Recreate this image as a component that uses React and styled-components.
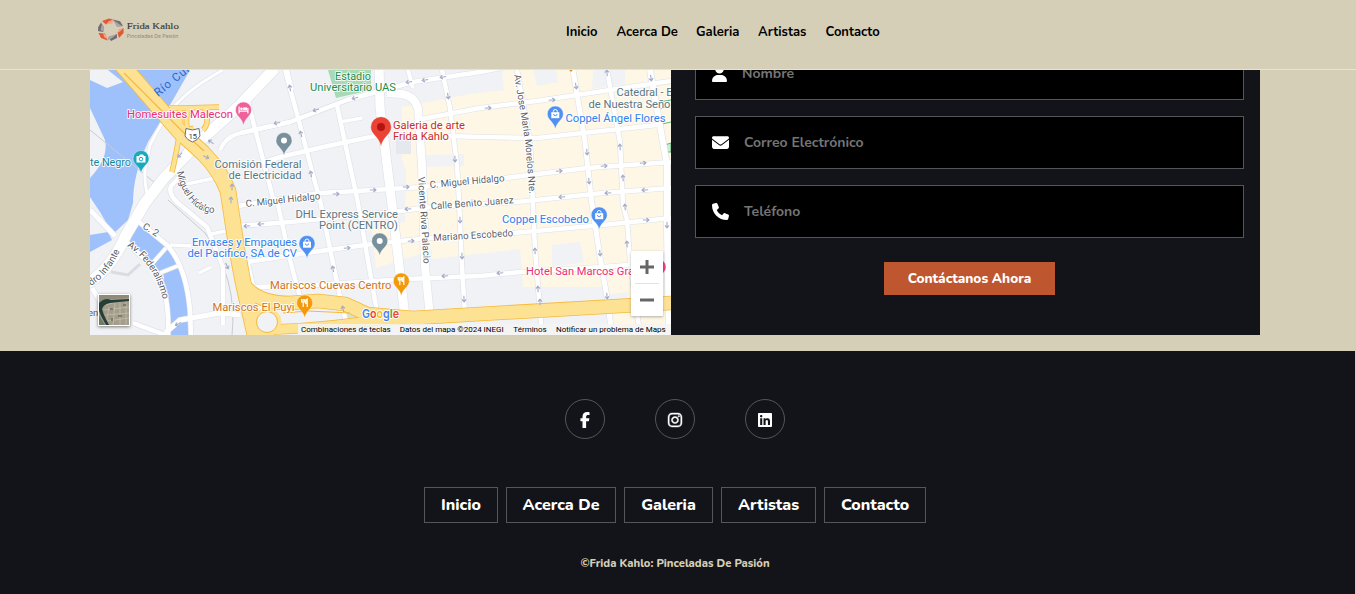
import React from "react";
import styled, { createGlobalStyle } from "styled-components";
import { FaUser, FaEnvelope, FaPhone, FaFacebookF, FaInstagram, FaLinkedin } from "react-icons/fa6";

const sand = "#d6cfb7";
const ink = "#131419";

const GlobalStyle = createGlobalStyle`
  * { box-sizing: border-box; }
  body {
    margin: 0;
    background: ${sand};
    font-family: Nunito, "Open Sans", "Noto Sans", sans-serif;
    overflow: hidden;
  }
`;

const Page = styled.div`
  height: 594px;
  display: flex;
  flex-direction: column;
`;

const Header = styled.header`
  height: 70px;
  flex: none;
  display: flex;
  background: ${sand};
  border-bottom: 1px solid #e8e3d3;
`;

const Brand = styled.a`
  width: 566px;
  padding: 15px 0 0 96px;
`;

const TopNav = styled.nav`
  display: flex;
  gap: 18px;
  padding-top: 23px;
`;

const TopLink = styled.a`
  width: ${(p) => p.$w}px;
  font-size: 13px;
  font-weight: 700;
  line-height: 18px;
  white-space: nowrap;
  color: #000;
`;

const Contact = styled.main`
  height: 281px;
  flex: none;
  padding: 0 96px 16px 90px;
  display: flex;
`;

const MapFrame = styled.div`
  position: relative;
  width: 581px;
  height: 265px;
  overflow: hidden;
  background: #f0f2f5;
  & > svg { display: block; }
`;

const ZoomControl = styled.div`
  position: absolute;
  left: 541px;
  top: 181px;
  width: 32px;
  height: 65px;
  padding: 0 4px;
  background: #fff;
  border-radius: 1px;
  box-shadow: 0 1px 3px rgba(0, 0, 0, 0.3);
  display: flex;
  flex-direction: column;
`;

const ZoomButton = styled.div`
  flex: 1;
  display: grid;
  place-items: center;
  & + & { border-top: 1px solid #e3e3e3; }
`;

const Satellite = styled.div`
  position: absolute;
  left: 8px;
  top: 224px;
  width: 32px;
  height: 32px;
  border: 1px solid #fff;
  box-shadow: 0 1px 3px rgba(0, 0, 0, 0.5);
  svg { display: block; }
`;

const Credits = styled.div`
  position: absolute;
  right: 0;
  bottom: 0;
  height: 11px;
  width: 373px;
  padding: 0 5px 0 3px;
  background: rgba(245, 245, 245, 0.85);
  display: flex;
  justify-content: space-between;
  font: 8px/12px Roboto, sans-serif;
  color: #000;
  white-space: nowrap;
`;

const Credit = styled.span`
  width: ${(p) => p.$w}px;
`;

const Form = styled.form`
  width: 589px;
  height: 265px;
  overflow: hidden;
  padding: 0 16px 40px 24px;
  background: ${ink};
  display: flex;
  flex-direction: column;
  justify-content: flex-end;
  gap: 16px;
`;

const Field = styled.label`
  height: 53px;
  flex: none;
  display: flex;
  align-items: center;
  gap: ${(p) => p.$gap || 15}px;
  padding-left: ${(p) => p.$pad || 16}px;
  background: #000;
  border: 1px solid #55565a;
  color: #fff;
`;

const Placeholder = styled.span`
  font-size: 14px;
  font-weight: 700;
  color: #757575;
`;

const Submit = styled.div`
  width: 171px;
  height: 33px;
  flex: none;
  align-self: center;
  margin-top: 8px;
  background: #be5630;
  color: #fff;
  font-size: 13.6px;
  font-weight: 800;
  line-height: 33px;
  text-align: center;
  white-space: nowrap;
`;

const Footer = styled.footer`
  flex: 1;
  margin-right: 1px;
  padding-top: 48px;
  padding-right: 5px;
  background: ${ink};
  display: flex;
  flex-direction: column;
  align-items: center;
`;

const Socials = styled.div`
  display: flex;
  gap: 50px;
`;

const Social = styled.a`
  width: 40px;
  height: 40px;
  padding-top: 2px;
  border: 1px solid #55565a;
  border-radius: 50%;
  display: grid;
  place-items: center;
  color: #fff;
  svg {
    stroke: #fff;
    stroke-width: ${(p) => p.$stroke || 0};
  }
`;

const FooterNav = styled.nav`
  display: flex;
  gap: 8px;
  margin-top: 48px;
`;

const FooterLink = styled.a`
  width: ${(p) => p.$w}px;
  height: 36px;
  border: 1px solid #55565a;
  color: #fff;
  font-size: 16px;
  font-weight: 800;
  line-height: 34px;
  text-align: center;
  white-space: nowrap;
`;

const Copyright = styled.p`
  margin: 31px 0 0;
  font-size: 11.2px;
  font-weight: 800;
  line-height: 19px;
  color: ${sand};
`;

function Logo() {
  return (
    <svg width="90" height="30" viewBox="96 15 90 30">
      <path d="M102 21 L109 18.6 L113 19.5 L106 24.5Z" fill="#e2592f" />
      <path d="M106 24.5 L109 21 L113.5 20 L112.5 23.3Z" fill="#f3a08c" />
      <path d="M113 19.6 L120 21.3 L123 26 L117 25.5Z" fill="#736c70" />
      <path d="M113 20 L117 22.5 L122.5 26.5 L117 27Z" fill="#aaa5a4" />
      <path d="M123.5 28 L123.6 33 L119 38 L117.5 32.5Z" fill="#e2592f" />
      <path d="M119 29 L123 28 L119.5 32 L117.5 32.5Z" fill="#f3a08c" />
      <path d="M117 34 L117 38 L111 41 L108.5 37.5Z" fill="#736c70" />
      <path d="M108.5 36.5 L117 34 L112 38 L107 40.5Z" fill="#aaa5a4" />
      <path d="M98.5 33 L105 33.5 L107.5 40.5 L101 38Z" fill="#e2592f" />
      <path d="M103 33 L106 35 L108 39.5 L104 37Z" fill="#f3a08c" />
      <path d="M101 22.5 L104 27.5 L103 32 L98 31 L98.2 27Z" fill="#736c70" />
      <path d="M102 24 L104 27 L103.5 32 L100.5 30Z" fill="#aaa5a4" />
      <text x="126.8" y="28.8" textLength="52" lengthAdjust="spacingAndGlyphs" fontFamily="Liberation Serif, serif" fontSize="9" fill="#3a3a3c" stroke="#3a3a3c" strokeWidth="0.15">Frida Kahlo</text>
      <text x="126.8" y="37.8" textLength="51.5" lengthAdjust="spacingAndGlyphs" fontFamily="Inter, sans-serif" fontSize="4.8" fill="#8a857a">Pinceladas De Pasión</text>
    </svg>
  );
}

const streets = [
  ["M285 70L300 125 313 175 320 200 340 297 348 330", 4.5],
  ["M337 105L347 152 357 198 377 312", 4.5],
  ["M240 133L290 122 347 100 413 82 480 72 500 68", 4.5],
  ["M340 122L362 118", 3.5],
  ["M220 150Q225 138 237 134L290 122", 4],
  ["M265 162L280 157 323 147 380 135", 4.5],
  ["M422 119L480 108 537 101 610 90 671 81", 4.5],
  ["M420 135L480 137 537 138 583 133 657 125", 4.5],
  ["M238 206L320 193 357 191 423 187 505 178 587 168 671 162", 4.5],
  ["M236 226L290 222 393 212 430 207 517 202 603 193 671 188", 4.5],
  ["M247 262L313 252 380 243 430 238 513 233 603 225 671 218", 4.5],
  ["M247 260L253 287 300 286 407 279 480 276 520 272 603 267 640 264", 4.5],
  ["M442 70L450 108 457 165 459 200 462 267 465 315", 4.5],
  ["M408 70L413 88", 4],
  ["M517 70L530 142 533 205 535 250 542 335", 4.5],
  ["M573 70L585 142 592 205 600 257 607 297 612 335", 5],
  ["M607 70L620 142 623 205 627 220 630 260 640 335", 4.5],
  ["M650 70L667 165 667 230 669 335", 6],
  ["M247 98L273 198 277 200 290 260 304 312", 4.5],
  ["M287 70L292 90", 4],
  ["M223 70Q190 88 175 106T150 145L145 170Q144 190 151 203", 3],
  ["M184 172L171 186Q168 194 178 203L207 227 223 267 223 325", 4.5],
  ["M187 184L215 178", 3.5],
  ["M170 245L191 246", 3.5],
  ["M208 235L225 231", 3.5],
  ["M199 273L211 267", 3.5],
  ["M138 221L167 245Q186 266 190 310L191 335", 4.5],
  ["M125 241L153 267Q170 290 168 335", 4.5],
  ["M165 333L180 320 220 313 240 315", 5],
  ["M150 266L166 248M160 273L180 265", 3.5],
  ["M90 210L115 236", 5],
  ["M92 288L99 300M133 323L168 336", 4.5],
  ["M275 68L240 105 200 141 164 178 145 203 126 235Q112 268 88 283", 11],
  ["M379 65L380 108 385 148 392 205 405 317", 9],
  ["M387 93L402 94Q414 96 418 108L422 165 425 267 430 317", 8],
];

const highways = [
  ["M180 108Q183 125 172 172", 4],
  ["M170 108L185 108 219 107M188 109Q183 134 194 128M205 109Q210 124 203 130", 4],
  ["M122 65L180 132 203 153Q220 170 228 191L237 250 243 282 256 340", 15],
  ["M243 283Q255 303 290 303L318 301 345 304 367 314 413 318 480 314 671 303", 13],
  ["M250 330Q300 330 362 322L420 318", 9],
];

const oneWays = [
  [316, 110, 162], [355, 98, 165], [409, 82, 170], [448, 96, 82], [425, 80, 170], [443, 77, 170],
  [301, 134, -105], [290, 88, -100], [311, 174, -100], [336, 194, 0], [373, 190, 0], [406, 187, 0], [455, 159, 88],
  [488, 108, -5], [552, 100, -5], [576, 86, 80], [607, 73, -95], [651, 78, 82], [587, 152, 84], [620, 147, -95],
  [559, 171, -4], [604, 166, -4], [643, 163, -4], [589, 181, 84], [623, 178, -95], [562, 197, 176], [608, 193, 176], [645, 190, 176],
  [180, 155, 132], [211, 142, 215], [232, 187, -90], [231, 200, -90], [247, 226, 176], [261, 224, 176], [277, 123, 170],
  [347, 248, -5], [333, 269, -100], [411, 241, -4], [408, 209, 176], [460, 220, 88], [462, 256, 88], [445, 276, 176], [464, 299, 88],
  [343, 309, -100], [500, 273, 176], [535, 251, -92], [538, 289, -92], [540, 302, -92], [600, 253, 84], [607, 296, 84], [627, 244, -95], [646, 220, 0], [667, 225, 90], [625, 207, -95],
  [206, 157, 25], [227, 266, 65], [178, 324, 150],
];

const teal = "#5b7885";
const green = "#1e8e4a";
const pink = "#ec2f73";
const red = "#cc2b28";
const blue = "#2f80f0";
const orange = "#d27318";

const labels = [
  ["Estadio", 335, 80, 36, green],
  ["Universitario UAS", 310, 91, 86, green],
  ["Homesuites Malecon", 127, 118, 106, pink],
  ["Galeria de arte", 393, 129.3, 72, red],
  ["Frida Kahlo", 393, 140.2, 56, red],
  ["Comisión Federal", 214.5, 167.7, 87, teal],
  ["de Electricidad", 228.5, 178.5, 73, teal],
  ["te Negro", 90, 165.7, 41, "#16869a"],
  ["DHL Express Service", 295.5, 218.2, 102.5, teal],
  ["Point (CENTRO)", 319, 229, 79, teal],
  ["Envases y Empaques", 192, 246.3, 105, blue],
  ["del Pacifico, SA de CV", 187.5, 257.2, 109.5, blue],
  ["Mariscos Cuevas Centro", 270, 288.5, 121.5, orange],
  ["Mariscos El Puyi", 212.5, 311, 82, orange],
  ["Coppel Ángel Flores", 565.5, 122, 100, blue],
  ["Coppel Escobedo", 502, 223, 87, blue],
  ["Hotel San Marcos Gra", 526, 275, 108, pink],
  ["Catedral - E", 616.5, 96.3, 56, teal],
  ["de Nuestra Seño", 588.5, 107.8, 82, teal],
];

const streetNames = [
  ["s1", "C. Miguel Hidalgo", "M430 188L507 181", 75],
  ["s2", "C. Miguel Hidalgo", "M246 207L322 199", 75],
  ["s3", "Calle Benito Juarez", "M431 209.5L516 203", 83],
  ["s4", "Mariano Escobedo", "M433.5 241L515 236", 80],
  ["s5", "Vicente Riva Palacio", "M418 177L424 268", 87],
  ["s6", "Av. Jose Maria Morelos Nte.", "M514 75L525 140 530 200", 120],
  ["s7", "Miguel Hidalgo", "M177 172Q180 190 192 203T223 212", 60],
  ["s8", "dro Infante", "M91 286Q110 274 121 248", 46],
  ["s9", "Av. Federalismo", "M127 246Q155 265 163 300", 66],
  ["s10", "C. 2", "M142 228L160 239", 17],
];

function Pin({ x, y, tip, r = 8, color, kind }) {
  return (
    <g>
      <path
        d={`M${x - r} ${y}a${r} ${r} 0 1 1 ${2 * r} 0c0 ${r * 0.75} ${-r * 0.8} ${r * 0.9} ${-r} ${tip - y}c${-r * 0.2} ${-(tip - y - r * 0.9)} ${-r} ${-(tip - y - r * 0.75)} ${-r} ${-(tip - y)}z`}
        fill={color}
        stroke="#fff"
        strokeWidth="0.4"
      />
      {kind === "dot" && <circle cx={x} cy={y} r="3" fill="#fff" />}
      {kind === "main" && <circle cx={x} cy={y} r="4" fill="#b31412" />}
      {kind === "food" && (
        <path d={`M${x - 3} ${y - 4}v3h3v-3M${x - 1.5} ${y - 4}v8M${x + 2.5} ${y + 4}v-8q-2 1 -1.5 4.5h1.5`} fill="none" stroke="#fff" strokeWidth="1.2" />
      )}
      {kind === "bag" && (
        <g>
          <path d={`M${x - 2} ${y - 1.5}v-1a2 2 0 0 1 4 0v1`} fill="none" stroke="#fff" strokeWidth="1" />
          <path d={`M${x - 4} ${y - 1.8}h8v6h-8z`} fill="#fff" />
          <path d={`M${x - 1.7} ${y}a1.7 1.7 0 0 0 3.4 0`} fill="none" stroke={color} strokeWidth="1" />
        </g>
      )}
      {kind === "bed" && (
        <g fill="#fff">
          <path d={`M${x - 5} ${y - 3.5}h1.2v4h7.6v-2.5h1.2v5.5h-1.2v-1.7h-7.6v1.7h-1.2z`} />
          <circle cx={x - 2} cy={y - 1.3} r="1.3" />
          <path d={`M${x - 0.3} ${y - 2.6}h4v2.6h-4z`} />
        </g>
      )}
      {kind === "camera" && (
        <g>
          <path d={`M${x - 4.5} ${y - 2.5}h2.5l1 -1.5h3l1 1.5h1.5v6.5h-9z`} fill="#fff" />
          <circle cx={x} cy={y + 0.6} r="1.8" fill="none" stroke={color} strokeWidth="1" />
        </g>
      )}
    </g>
  );
}

function CityMap() {
  return (
    <svg width="581" height="265" viewBox="90 70 581 265" fontFamily="Roboto, sans-serif">
      <rect x="90" y="70" width="581" height="265" fill="#f0f2f5" />
      <path d="M402 107L480 92 505 70H671V335H613L606 287H523L520 249 432 259 432 250 376 268 372 228 405 222 406 170 402 160Z" fill="#fef7e5" />
      <g fill="#f0f2f5">
        <path d="M470 79L502 72 504 90 470 94ZM533 70H556L558 82 537 86ZM593 70H625V84L592 89ZM422 155L464 154V166L422 167ZM552 245L580 242 584 262 552 267ZM604 295L628 292 626 310 604 312Z" />
      </g>
      <path d="M396 137H411V154H396Z" fill="#e5e8ec" />
      <g fill="#9fc1fb">
        <path d="M108 70H190Q164 116 148 142 133 174 133 203L128 220 113 234 100 212 90 197V178Q109 158 105 140L90 108V80L107 88 123 82Z" />
        <path d="M90 252V235L108 232 112 240Z" />
        <path d="M140 222L166 245Q186 265 190 335H168Q172 290 153 267L128 240Z" />
      </g>
      <path d="M328 70H371V90L336 98Z" fill="#a8dab5" />
      <path d="M347 310L366 318 362 322H347Z" fill="#cfe5d5" />
      <path d="M659 102L671 100M660 109L669 106M662 124L671 122M665 145L671 143V152H667Z" fill="#ceead6" stroke="#34a853" strokeWidth="0.8" />
      <path d="M90 130L160 187M168 200L205 233Q238 280 232 335" fill="none" stroke="#c8cbd0" strokeWidth="1" />
      <path d="M111 272L128 275 140 264" fill="none" stroke="#d9dce1" strokeWidth="3" />
      <g fill="none" strokeLinejoin="round">
        {streets.map(([d, w], i) => <path key={i} d={d} stroke="#dde1e8" strokeWidth={w + 1.2} />)}
        {streets.map(([d, w], i) => <path key={i} d={d} stroke="#fff" strokeWidth={w} />)}
        {highways.map(([d, w], i) => <path key={i} d={d} stroke="#f6b93b" strokeWidth={w + 1.6} />)}
        {highways.map(([d, w], i) => <path key={i} d={d} stroke="#fde293" strokeWidth={w} />)}
        <circle cx="267" cy="322" r="14" fill="#fde293" stroke="#fde293" />
        <circle cx="267" cy="322" r="10.5" fill="#f0f2f5" stroke="#f6b93b" />
        <path d="M124 73L182 131 204 151" stroke="#f6b93b" strokeWidth="1.2" />
        <path d="M283 313L308 311 350 313" stroke="#f6b93b" strokeWidth="1" />
        {oneWays.map(([x, y, a], i) => (
          <path key={i} transform={`translate(${x} ${y}) rotate(${a})`} d="M-3.2 0H2.6M0.4 -2L3 0 0.4 2" stroke="#a5abc8" strokeWidth="1.1" />
        ))}
      </g>
      <circle cx="571" cy="70" r="1.5" fill="#ee8a16" />
      <path d="M186 128.5L192.5 130 199 128.5 200 136Q198 140 192.5 142 187 140 185 136Z" fill="#fff" stroke="#6b7075" strokeWidth="1" />
      <text x="188.5" y="138.5" fontSize="8" textLength="8.5" fill="#3c4043">15</text>

      <defs>
        <path id="rio" d="M158 97L196 66" />
        {streetNames.map(([id, , d]) => <path key={id} id={id} d={d} />)}
      </defs>
      <text fontSize="11.5" fill="#2a66c9"><textPath href="#rio" textLength="45">Río Culi</textPath></text>
      {streetNames.map(([id, text, , len]) => (
        <text key={id} fontSize="9.7" fill="#5b6066" stroke="#fff" strokeWidth="2" paintOrder="stroke" strokeLinejoin="round">
          <textPath href={`#${id}`} textLength={len}>{text}</textPath>
        </text>
      ))}
      <text x="88" y="316" fontSize="9.5" fill="#5b6066">en</text>

      <Pin x={243.5} y={110} tip={125.5} color="#f0609a" kind="bed" />
      <Pin x={141} y={158.5} tip={173} color="#17a9bd" kind="camera" />
      <Pin x={284} y={140.5} tip={155.5} color="#78909c" kind="dot" />
      <Pin x={379.7} y={241} tip={255.5} color="#78909c" kind="dot" />
      <Pin x={555.3} y={114} tip={129} color="#4f90f2" kind="bag" />
      <Pin x={599.2} y={215} tip={229.5} color="#4f90f2" kind="bag" />
      <Pin x={307} y={243.5} tip={258.5} color="#4f90f2" kind="bag" />
      <Pin x={401.3} y={281} tip={296} color="#f29a0c" kind="food" />
      <Pin x={304.7} y={303} tip={318} color="#f29a0c" kind="food" />
      <Pin x={658} y={267} tip={281} color="#f0407e" />
      <Pin x={381} y={127} tip={146.5} r={10.3} color="#ea4335" kind="main" />

      {labels.map(([text, x, y, w, color]) => (
        <text key={text} x={x} y={y} fontSize="11.8" textLength={w} lengthAdjust="spacingAndGlyphs" fill={color} stroke="#fff" strokeOpacity="0.85" strokeWidth="2" paintOrder="stroke" strokeLinejoin="round">{text}</text>
      ))}
      <text x="362" y="318" fontFamily="Inter, sans-serif" fontSize="12" fontWeight="600" textLength="37" lengthAdjust="spacingAndGlyphs" stroke="#fff" strokeWidth="1.5" paintOrder="stroke">
        <tspan fill="#4285f4">G</tspan><tspan fill="#ea4335">o</tspan><tspan fill="#fbbc05">o</tspan><tspan fill="#4285f4">g</tspan><tspan fill="#34a853">l</tspan><tspan fill="#ea4335">e</tspan>
      </text>
    </svg>
  );
}

function SatelliteView() {
  return (
    <svg width="30" height="30" viewBox="0 0 30 30">
      <rect width="30" height="30" fill="#a39d8c" />
      <path d="M0 14L6 10 14 8 30 5M7 30L10 12M14 30L16 8M21 30V7M27 30V6M5 15L30 12M6 20L30 18M8 26L30 23" stroke="#c5bdaa" strokeWidth="0.8" fill="none" />
      <path d="M11 13h3v2h-3zM19 20h4v2h-4zM24 9h3v2h-3zM12 23h2v3h-2z" fill="#7c7b6c" />
      <path d="M0 0H30V3L12 4Q4 3 0 8Z" fill="#8e8b79" />
      <path d="M0 8Q6 2 12 5L30 4V6L11 8Q5 9 3 14L5 20 10 30H7L2 21 0 16Z" fill="#253f38" />
      <path d="M0 20L6 30H0Z" fill="#6f7a66" />
    </svg>
  );
}

export default function App() {
  return (
    <Page>
      <GlobalStyle />
      <Header>
        <Brand><Logo /></Brand>
        <TopNav>
          <TopLink $w={32.5}>Inicio</TopLink>
          <TopLink $w={61.5}>Acerca De</TopLink>
          <TopLink $w={44}>Galeria</TopLink>
          <TopLink $w={49.5}>Artistas</TopLink>
          <TopLink $w={56}>Contacto</TopLink>
        </TopNav>
      </Header>
      <Contact>
        <MapFrame>
          <CityMap />
          <Satellite><SatelliteView /></Satellite>
          <ZoomControl>
            <ZoomButton><svg width="14" height="14"><path d="M7 0V14M0 7H14" stroke="#666" strokeWidth="3" /></svg></ZoomButton>
            <ZoomButton><svg width="14" height="14"><path d="M0 7H14" stroke="#666" strokeWidth="3" /></svg></ZoomButton>
          </ZoomControl>
          <Credits>
            <Credit $w={90}>Combinaciones de teclas</Credit>
            <Credit $w={105}>Datos del mapa ©2024 INEGI</Credit>
            <Credit $w={34}>Términos</Credit>
            <Credit $w={110}>Notificar un problema de Maps</Credit>
          </Credits>
        </MapFrame>
        <Form>
          <Field $pad={15} $gap={14}><FaUser size={17} /><Placeholder>Nombre</Placeholder></Field>
          <Field><FaEnvelope size={17} /><Placeholder>Correo Electrónico</Placeholder></Field>
          <Field><FaPhone size={17} /><Placeholder>Teléfono</Placeholder></Field>
          <Submit>Contáctanos Ahora</Submit>
        </Form>
      </Contact>
      <Footer>
        <Socials>
          <Social><FaFacebookF size={16} /></Social>
          <Social $stroke={14}><FaInstagram size={16} /></Social>
          <Social><FaLinkedin size={16} /></Social>
        </Socials>
        <FooterNav>
          <FooterLink $w={74}>Inicio</FooterLink>
          <FooterLink $w={110}>Acerca De</FooterLink>
          <FooterLink $w={89}>Galeria</FooterLink>
          <FooterLink $w={95}>Artistas</FooterLink>
          <FooterLink $w={102}>Contacto</FooterLink>
        </FooterNav>
        <Copyright>©Frida Kahlo: Pinceladas De Pasión</Copyright>
      </Footer>
    </Page>
  );
}
